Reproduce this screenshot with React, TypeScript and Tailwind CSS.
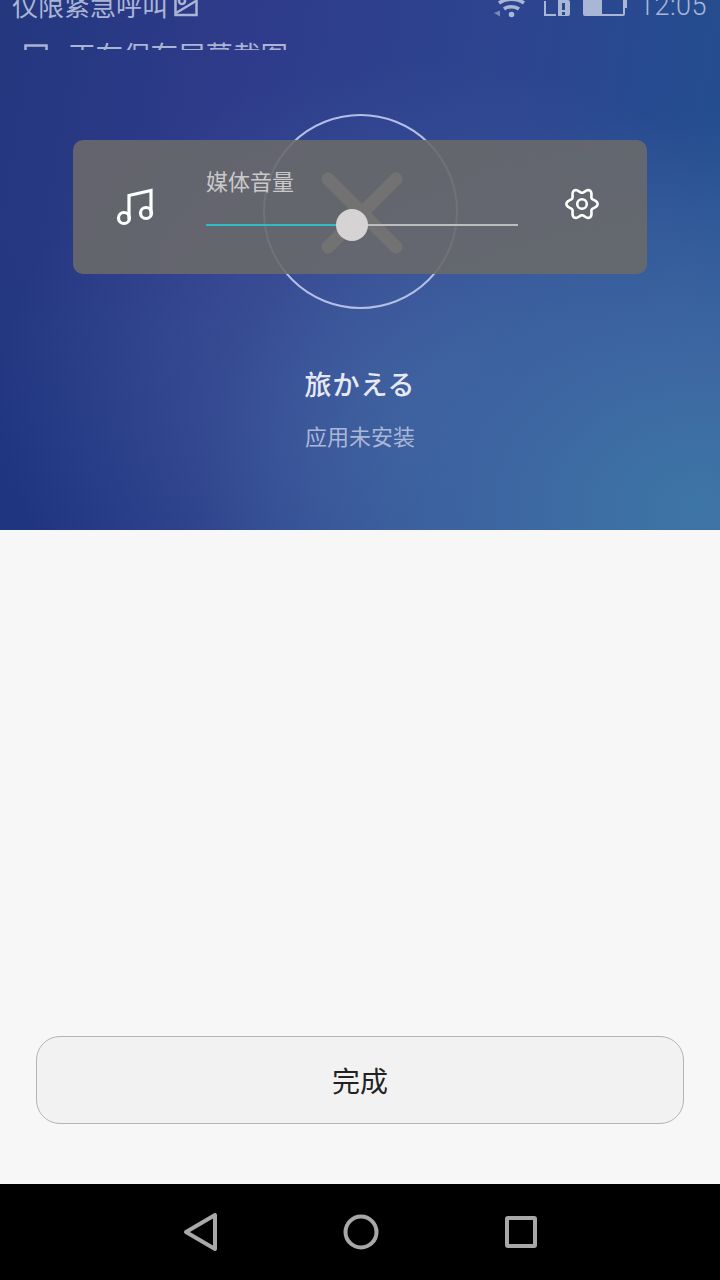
const cjk = "font-['Noto_Sans_CJK_SC','Noto_Sans',sans-serif]";

// six lobed gear outline, lobes at 0/60/120... degrees
const gearPath =
  Array.from({ length: 120 }, (_, i) => {
    const a = (i / 120) * Math.PI * 2;
    const r = 13.4 + 2.2 * Math.cos(6 * a);
    return `${i === 0 ? 'M' : 'L'}${(17 + r * Math.cos(a)).toFixed(2)} ${(17 + r * Math.sin(a)).toFixed(2)}`;
  }).join('') + 'Z';

function StatusIcons() {
  return (
    <div className="flex items-start text-[#a9b6d6]">
      <svg width="36" height="18" viewBox="0 0 36 18" fill="none" stroke="currentColor" strokeWidth="3.500">
        <path d="M6 3c7-5 18-5 25 0" />
        <path d="M11 9c4-3 11-3 15 0" />
        <circle cx="18.500" cy="14.500" r="2.800" fill="currentColor" stroke="none" />
        <path d="M1 13l6-2.500v6z" fill="currentColor" stroke="none" opacity="0.6" />
      </svg>
      <svg width="26" height="16" viewBox="0 0 26 16" fill="none" className="ml-[15px]">
        <path d="M1 1v14h11" stroke="currentColor" strokeWidth="2" />
        <path d="M14 0h10a2 2 0 0 1 2 2v12a2 2 0 0 1-2 2H14z" fill="currentColor" />
        <path d="M18 3h3v7h-3zM18 12h3v3h-3z" fill="#2b4a8a" />
      </svg>
      <svg width="44" height="16" viewBox="0 0 44 16" fill="none" className="ml-[13px]">
        <path d="M1 0v14a1 1 0 0 0 1 1h38a1 1 0 0 0 1-1V0" stroke="currentColor" strokeWidth="2" />
        <rect x="1" y="0" width="18" height="15" fill="currentColor" />
        <rect x="41" y="0" width="3" height="8" fill="currentColor" />
      </svg>
      <span className="-mt-[9px] ml-[12px] font-['Roboto',sans-serif] text-[27px] leading-[30px] font-light tracking-[0.5px]">12:05</span>
    </div>
  );
}

function VolumePanel() {
  return (
    <div className="absolute top-[140px] left-[73px] flex h-[134px] w-[574px] rounded-[10px] bg-[#69696a]/90">
      <svg width="38" height="40" viewBox="0 0 38 40" fill="none" stroke="white" strokeWidth="3.200" className="mt-[47px] ml-[43px]">
        <circle cx="8" cy="31" r="5.500" />
        <circle cx="30" cy="26" r="5.500" />
        <path d="M13 31V8.500L35 3.500V26" strokeLinecap="square" />
      </svg>
      <div className="ml-[52px] flex w-[312px] flex-col">
        <span className={`${cjk} mt-[24px] text-[22px] leading-[32px] text-[#c9c9c9]`}>媒体音量</span>
        <div className="relative mt-[28px] flex h-[2px] w-full">
          <div className="w-[134px] bg-[#2fbcc4]" />
          <div className="flex-1 bg-[#bdbdbd]" />
          <div className="absolute top-[-15px] left-[130px] size-[32px] rounded-full bg-[#d5d3d4]" />
        </div>
      </div>
      <svg width="34" height="34" viewBox="0 0 34 34" fill="none" stroke="white" strokeWidth="2.600" strokeLinejoin="round" className="mt-[47px] ml-[47px]">
        <path d={gearPath} />
        <circle cx="17" cy="17" r="4.800" />
      </svg>
    </div>
  );
}

export default function App() {
  return (
    <div className={`${cjk} flex h-[1280px] w-[720px] flex-col overflow-hidden bg-[#f7f7f7]`}>
      <section className="relative h-[530px] overflow-hidden bg-[radial-gradient(ellipse_500px_400px_at_700px_510px,#3d76a6_0%,#3d68a2_35%,rgba(63,100,160,0)_100%),radial-gradient(ellipse_420px_340px_at_420px_400px,#41599c_0%,rgba(65,89,156,0)_100%),radial-gradient(ellipse_460px_300px_at_0px_530px,#1e3580_0%,rgba(30,53,128,0)_100%),linear-gradient(100deg,#24377f_0%,#2e3b8a_30%,#2d4590_65%,#20508f_100%)]">
        <div className="flex h-[50px] flex-col overflow-hidden">
          <div className="flex h-[18px] items-start justify-between pr-[13px] pl-[12px]">
            <div className="-mt-[13px] flex items-start gap-[6px] text-[#aab5d4]">
              <span className="text-[26px] leading-[36px]">仅限紧急呼叫</span>
              <svg width="24" height="24" viewBox="0 0 24 24" fill="none" stroke="currentColor" strokeWidth="2.500" className="mt-[6px]">
                <rect x="1.500" y="-2" width="21" height="24" />
                <path d="M2 20L22 8M8 5a3 3 0 1 0 .01 0" />
              </svg>
            </div>
            <StatusIcons />
          </div>
          <div className="mt-[16px] flex items-start pl-[24px] text-[#aab5d4]">
            <svg width="24" height="24" viewBox="0 0 24 24" fill="none" stroke="currentColor" strokeWidth="2.500" className="mt-[10px]">
              <rect x="1.500" y="1.500" width="21" height="21" />
              <path d="M2 14c5-6 8-6 12-1" />
            </svg>
            <span className="ml-[20px] text-[27.500px] leading-[40px] whitespace-nowrap">正在保存屏幕截图</span>
          </div>
        </div>

        {/* circle and X sit under the volume panel */}
        <div className="absolute top-[114px] left-[263px] flex size-[195px] items-center justify-center rounded-full border-2 border-[#b4bfe6]">
          <svg width="84" height="84" viewBox="0 0 84 84" stroke="#c4c4c4" strokeWidth="13" strokeLinecap="round">
            <path d="M9 9l68 68M77 9L9 77" />
          </svg>
        </div>
        <VolumePanel />

        <div className="flex flex-col items-center pt-[315px]">
          <span className="text-[27px] leading-[38px] font-medium tracking-[1px] text-[#e6e9f4]">旅かえる</span>
          <span className="mt-[16px] text-[22px] leading-[32px] text-[#abb7d8]">应用未安装</span>
        </div>
      </section>

      <main className="flex flex-1 flex-col justify-end px-[36px] pb-[60px]">
        <button className="h-[88px] w-full rounded-[24px] border border-[#b5b5b5] bg-[#f2f2f2] text-[28px] text-[#222222]">完成</button>
      </main>

      <nav className="flex h-[96px] items-center bg-black pb-[1px] text-[#a8a8a8]">
        <svg width="36" height="40" viewBox="0 0 36 40" fill="none" stroke="currentColor" strokeWidth="4" strokeLinejoin="round" className="ml-[182px]">
          <path d="M33 3v34L4 20z" />
        </svg>
        <svg width="36" height="36" viewBox="0 0 36 36" fill="none" stroke="currentColor" strokeWidth="4" className="ml-[125px]">
          <circle cx="18" cy="18" r="15.500" />
        </svg>
        <svg width="32" height="32" viewBox="0 0 32 32" fill="none" stroke="currentColor" strokeWidth="4" strokeLinejoin="round" className="ml-[126px]">
          <rect x="2" y="2" width="28" height="28" rx="1" />
        </svg>
      </nav>
    </div>
  );
}
